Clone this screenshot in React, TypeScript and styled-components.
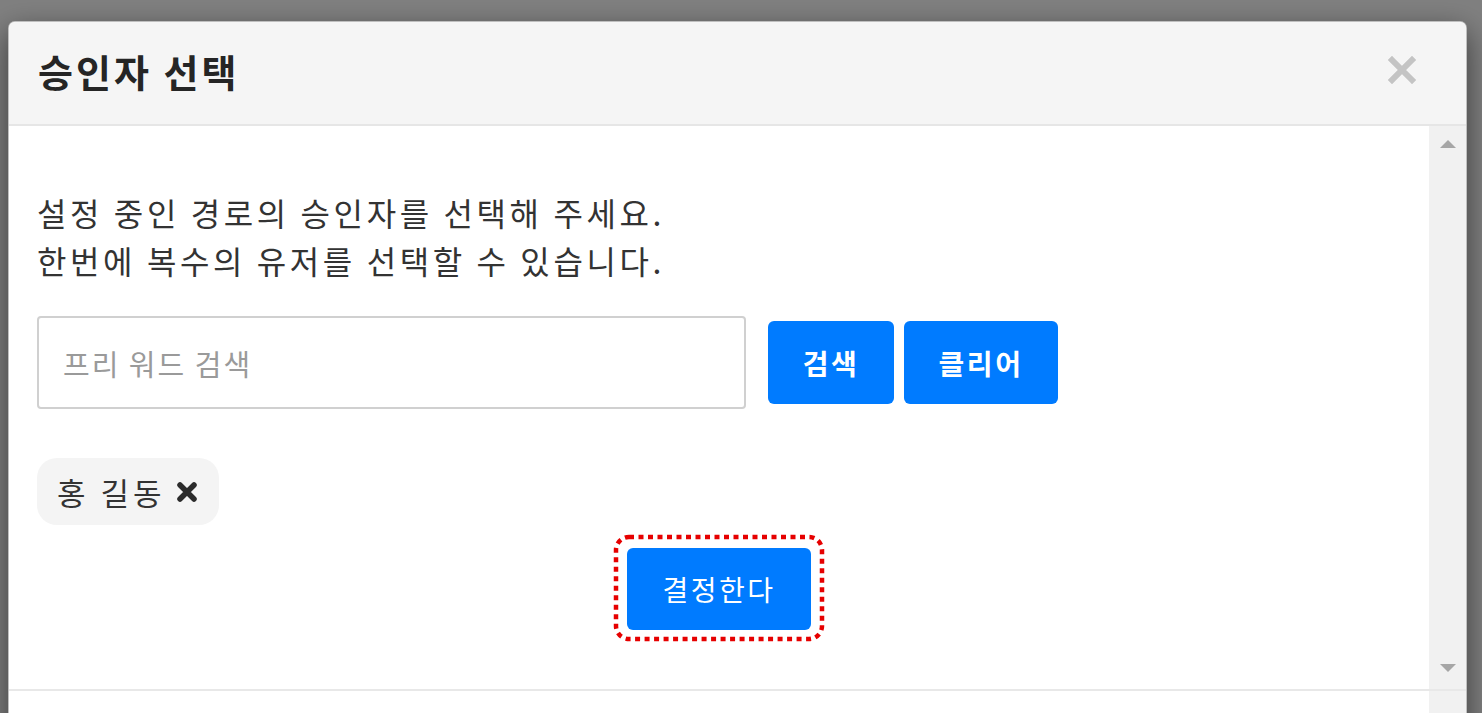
import React from "react";
import styled, { createGlobalStyle } from "styled-components";

const Global = createGlobalStyle`
  html, body { margin: 0; padding: 0; height: 100%; overflow: hidden; }
  body { background: #808080; font-family: "Noto Sans CJK KR", "Noto Sans", sans-serif; }
  * { box-sizing: border-box; }
`;

const Backdrop = styled.div`
  height: 713px;
  padding: 21px 15px 0 8px;
  overflow: hidden;
`;

const Modal = styled.div`
  height: 720px;
  background: #fff;
  border: 1px solid rgba(0, 0, 0, 0.25);
  border-radius: 7px 7px 0 0;
  box-shadow: 0 10px 30px rgba(0, 0, 0, 0.55);
  display: flex;
  flex-direction: column;
  overflow: hidden;
`;

const Header = styled.div`
  height: 104px;
  flex: none;
  background: #f5f5f5;
  border-bottom: 2px solid #e6e6e6;
  display: flex;
  align-items: center;
  justify-content: space-between;
  padding: 0 50px 6px 29px;
`;

const Title = styled.h4`
  margin: 0;
  font-size: 38px;
  font-weight: 700;
  color: #252525;
  letter-spacing: 3px;
`;

const Close = styled.button`
  border: 0;
  background: none;
  padding: 0;
  width: 28px;
  height: 28px;
  display: flex;
  cursor: pointer;
`;

const Body = styled.div`
  height: 563px;
  flex: none;
  display: flex;
`;

const Content = styled.div`
  flex: 1;
  padding: 62px 28px 0 28px;
  display: flex;
  flex-direction: column;
`;

const Intro = styled.p`
  margin: 0;
  font-size: 32px;
  line-height: 48px;
  letter-spacing: 3.6px;
  color: #333;
`;

const SearchRow = styled.div`
  margin-top: 32px;
  display: flex;
  align-items: center;
`;

const SearchInput = styled.input`
  width: 709px;
  height: 93px;
  border: 2px solid #d0d0d0;
  border-radius: 4px;
  padding: 0 24px;
  font-family: inherit;
  font-size: 29px;
  letter-spacing: 2px;
  color: #333;
  outline: none;
  &::placeholder { color: #9a9a9a; }
`;

const BlueButton = styled.button<{ $w: number; $h: number; $bold?: boolean }>`
  width: ${(p) => p.$w}px;
  height: ${(p) => p.$h}px;
  background: #007bff;
  color: #fff;
  border: 0;
  border-radius: 6px;
  font-family: inherit;
  font-size: 28px;
  letter-spacing: 2.5px;
  font-weight: ${(p) => (p.$bold ? 700 : 400)};
  cursor: pointer;
  flex: none;
`;

const ButtonGroup = styled.div`
  margin-left: 22px;
  display: flex;
  gap: 10px;
`;

const Tags = styled.div`
  margin-top: 49px;
  display: flex;
`;

const Tag = styled.span`
  height: 67px;
  display: inline-flex;
  align-items: center;
  gap: 10px;
  padding: 0 21px 0 20px;
  background: #f4f4f4;
  border-radius: 20px;
  font-size: 31px;
  letter-spacing: 4px;
  color: #333;
`;

const Actions = styled.div`
  margin-top: 23px;
  display: flex;
  justify-content: center;
`;

const Highlight = styled.div`
  position: relative;
  display: flex;
`;

const Dots = styled.svg`
  position: absolute;
  left: -13px;
  top: -13px;
  width: calc(100% + 26px);
  height: calc(100% + 24px);
  overflow: visible;
  pointer-events: none;
`;

const Scrollbar = styled.div`
  width: 37px;
  flex: none;
  background: #f1f1f1;
  display: flex;
  flex-direction: column;
  justify-content: space-between;
  align-items: center;
  padding: 13px 0 16px;
`;

const Footer = styled.div`
  flex: 1;
  display: flex;
  border-top: 2px solid #e8e8e8;
`;

const FooterFill = styled.div`
  flex: 1;
`;

const FooterTrack = styled.div`
  width: 37px;
  background: #f1f1f1;
`;

const Arrow = ({ down }: { down?: boolean }) => (
  <svg width="16" height="9" viewBox="0 0 16 9">
    <polygon points={down ? "0,0 16,0 8,8" : "0,9 16,9 8,1"} fill="#a6a6a6" />
  </svg>
);

const CloseIcon = () => (
  <svg width="28" height="28" viewBox="0 0 28 28">
    <path d="M4 4 L24 24 M24 4 L4 24" stroke="#c4c4c4" strokeWidth="6" strokeLinecap="square" />
  </svg>
);

const RemoveIcon = () => (
  <svg width="22" height="22" viewBox="0 0 22 22">
    <path d="M4 4 L18 18 M18 4 L4 18" stroke="#2b2b2b" strokeWidth="5.5" strokeLinecap="round" />
  </svg>
);

const DecideButton = () => {
  return (
    <Highlight>
      <BlueButton $w={184} $h={82}>결정한다</BlueButton>
      <Dots>
        <rect
          x="2"
          y="2"
          width="calc(100% - 4px)"
          height="calc(100% - 4px)"
          rx="13"
          fill="none"
          stroke="#e60000"
          strokeWidth="4.5"
          strokeDasharray="5 4.5"
        />
      </Dots>
    </Highlight>
  );
};

export default function App() {
  return (
    <>
      <Global />
      <Backdrop>
        <Modal>
          <Header>
            <Title>승인자 선택</Title>
            <Close aria-label="close"><CloseIcon /></Close>
          </Header>
          <Body>
            <Content>
              <Intro>
                설정 중인 경로의 승인자를 선택해 주세요.
                <br />
                한번에 복수의 유저를 선택할 수 있습니다.
              </Intro>
              <SearchRow>
                <SearchInput placeholder="프리 워드 검색" />
                <ButtonGroup>
                  <BlueButton $w={126} $h={83} $bold>검색</BlueButton>
                  <BlueButton $w={154} $h={83} $bold>클리어</BlueButton>
                </ButtonGroup>
              </SearchRow>
              <Tags>
                <Tag>
                  홍 길동
                  <RemoveIcon />
                </Tag>
              </Tags>
              <Actions>
                <DecideButton />
              </Actions>
            </Content>
            <Scrollbar>
              <Arrow />
              <Arrow down />
            </Scrollbar>
          </Body>
          <Footer>
            <FooterFill />
            <FooterTrack />
          </Footer>
        </Modal>
      </Backdrop>
    </>
  );
}
